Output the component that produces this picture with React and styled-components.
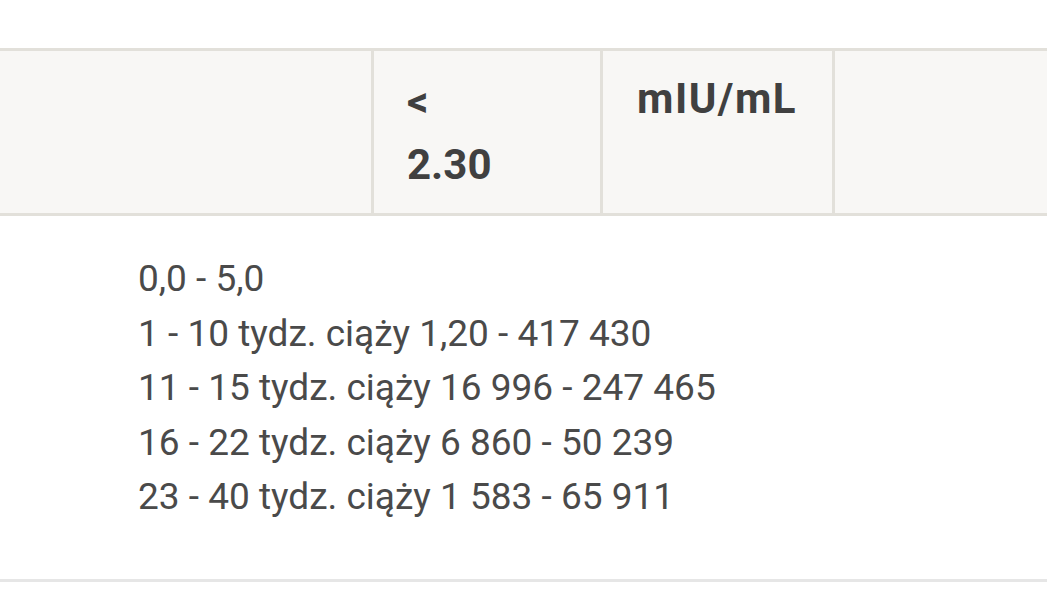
import React from 'react'
import styled, { createGlobalStyle } from 'styled-components'

const GlobalStyle = createGlobalStyle`
	html, body {
		margin: 0;
		padding: 0;
		background: #ffffff;
		font-family: Roboto, 'Noto Sans', sans-serif;
		color: #444444;
	}
`

const ranges = [
	'0,0 - 5,0',
	'1 - 10 tydz. ciąży 1,20 - 417 430',
	'11 - 15 tydz. ciąży 16 996 - 247 465',
	'16 - 22 tydz. ciąży 6 860 - 50 239',
	'23 - 40 tydz. ciąży 1 583 - 65 911',
]

const App = () => {
	return (
		<Page>
			<GlobalStyle />
			<ResultRow>
				<Cell />
				<Cell>
					{'<'}
					<br />
					2.30
				</Cell>
				<UnitCell>mIU/mL</UnitCell>
				<Cell $last />
			</ResultRow>
			<Norms>
				{ranges.map((r) => (
					<NormLine key={r}>{r}</NormLine>
				))}
			</Norms>
		</Page>
	)
}

const Page = styled.div`
	width: 1047px;
	height: 602px;
	padding-top: 48px;
	box-sizing: border-box;
	overflow: hidden;
`

const ResultRow = styled.div`
	display: grid;
	grid-template-columns: 374px 229px 232px 1fr;
	width: 1060px;
	height: 168px;
	box-sizing: border-box;
	background: #f8f7f5;
	border-top: 3px solid #e2e0da;
	border-bottom: 3px solid #e2e0da;
`

const Cell = styled.div`
	padding: 19px 20px 0 33px;
	font-size: 42px;
	font-weight: 700;
	line-height: 63px;
	color: #404040;
	border-right: ${(p) => (p.$last ? 'none' : '3px solid #e2e0da')};
`

const UnitCell = styled(Cell)`
	padding-top: 16px;
	padding-left: 34px;
	letter-spacing: 1.5px;
	white-space: nowrap;
`

const Norms = styled.div`
	padding: 36px 0 54px 138px;
	border-bottom: 3px solid #e6e6e6;
`

const NormLine = styled.div`
	font-size: 37px;
	line-height: 54.6px;
	color: #4a4a4a;
	white-space: nowrap;
`

export default App
